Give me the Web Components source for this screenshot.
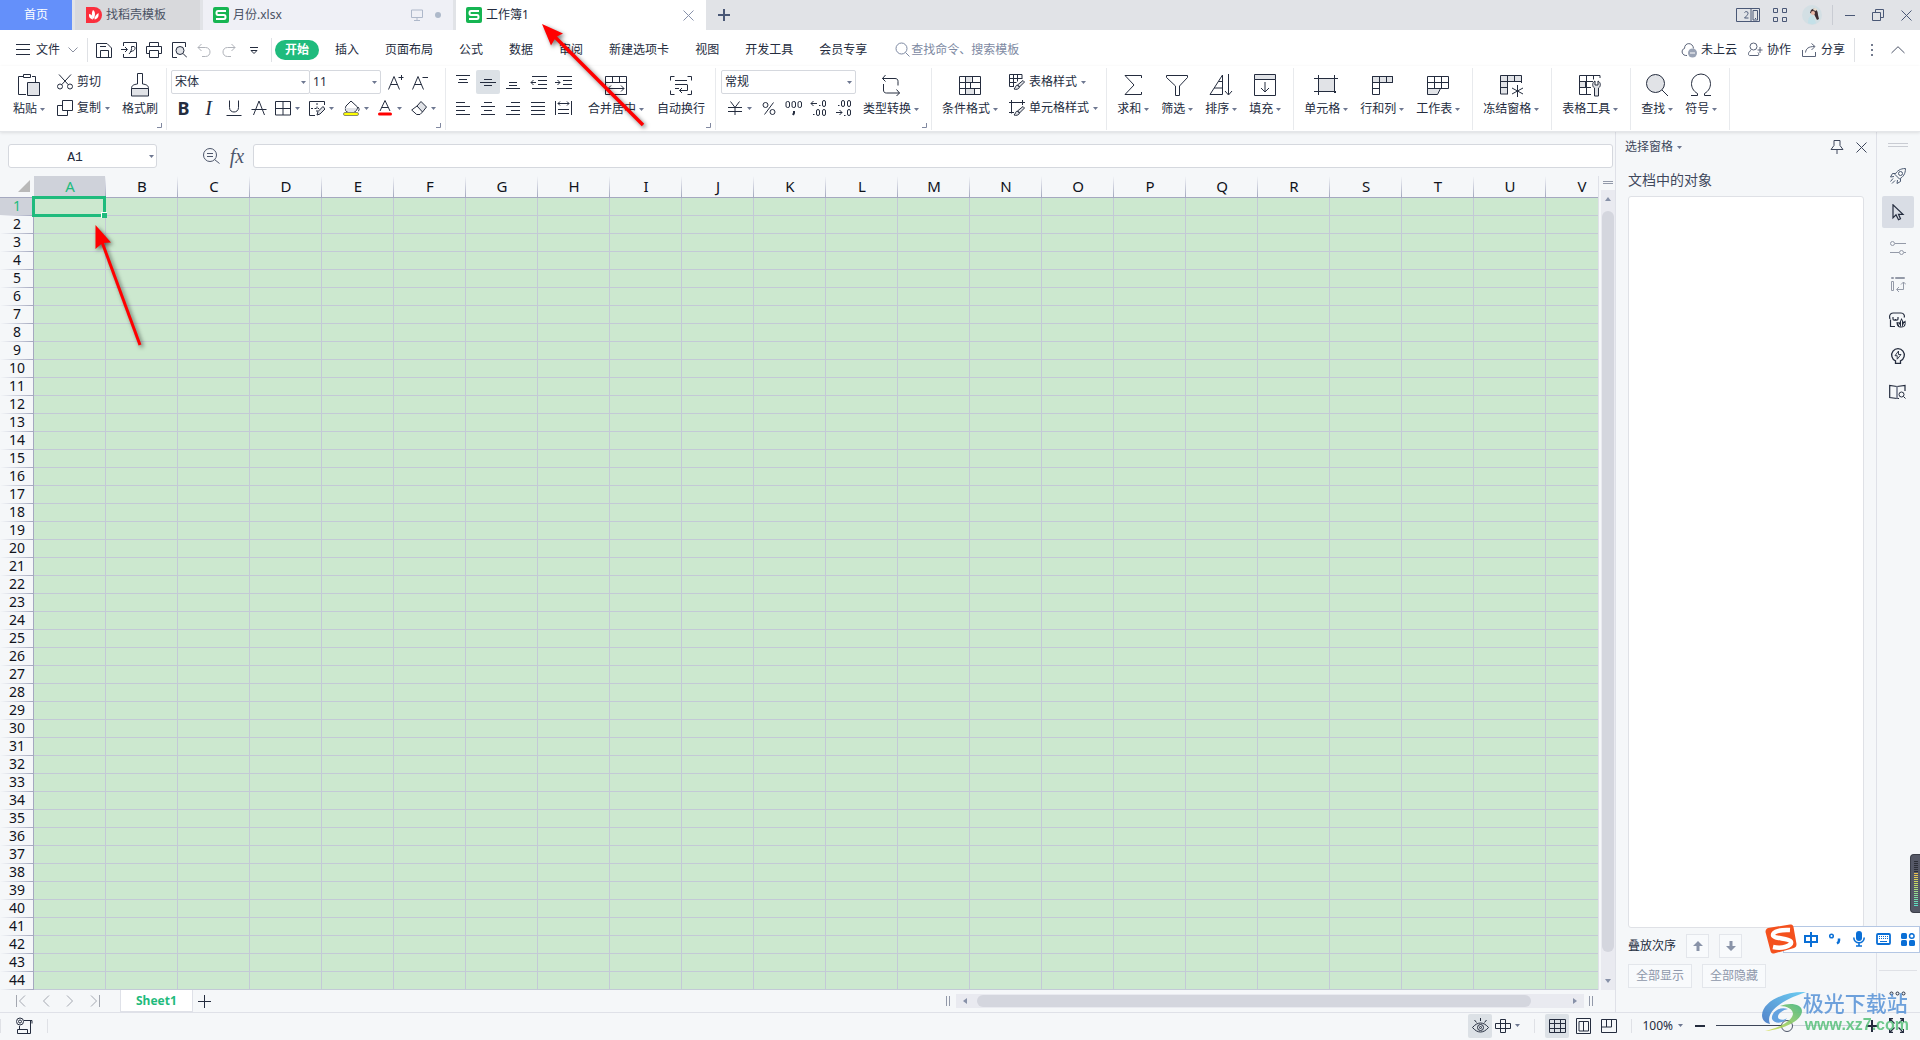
<!DOCTYPE html>
<html lang="zh-CN">
<head>
<meta charset="utf-8">
<title>工作簿1</title>
<style>
html,body{margin:0;height:100%}
body{font:12px/16px "Noto Sans","Noto Sans CJK SC",sans-serif;color:#242c3e;background:#f5f7f9;overflow:hidden}
</style>
</head>
<body>
<et-app></et-app>
<script>
const BASE = `<style>
*{box-sizing:border-box}
:host([hidden]){display:none}
button,input,select{font:inherit;color:inherit;margin:0;padding:0;border:0;background:none;border-radius:0;outline:0}
button{display:flex;align-items:center;justify-content:center;white-space:nowrap}
a{color:inherit;text-decoration:none}
svg{display:block}
</style>`;
function define(name, html, setup) {
  customElements.define(name, class extends HTMLElement {
    constructor() {
      super();
      const root = this.attachShadow({ mode: 'open' });
      const t = document.createElement('template');
      t.innerHTML = BASE + (typeof html === 'function' ? html(this) : html);
      root.append(t.content.cloneNode(true));
      if (setup) setup(root, this);
    }
  });
}

/* [width, height, markup]; strokes use currentColor */
const G = '#e1e3e7';
const ICONS = {
  caret: [5, 3, '<path d="M0 0h5L2.500 3z" fill="#6d7790" stroke="none"/>'],
  launcher: [5, 5, '<path d="M4.500 0v4.500H0" stroke="#8088a0"/>'],
  paste: [22, 24, `<path d="M5 3.500H.5v18H8M14 3.500h3.500V9"/><path d="M5.500 1.500h7v3h-7z"/><path d="M9.500 9.500h12v13h-12z" fill="${G}"/>`],
  cut: [16, 16, '<circle cx="3" cy="12.500" r="2.500"/><circle cx="13" cy="12.500" r="2.500"/><path d="M2 .5L11.300 10.700M14 .5L4.700 10.700"/>'],
  copy: [16, 16, '<path d="M5.500.5h10v10h-10z"/><path d="M5.500 5.500h-5v10h10v-5"/>'],
  brush: [20, 24, `<path d="M1.500 15.500h17v7.500h-17z" fill="${G}"/><path d="M1.500 15.500c0-3 2-4 6-4.500V.5h5V11c4 .5 6 1.500 6 4.500"/>`],
  fontup: [16, 16, '<path d="M.5 15.500L6 2.500l5.500 13M2.500 10.500h7M10.500 3.500h5M13.500 1v5"/>'],
  fontdown: [16, 16, '<path d="M.5 15.500L6 2.500l5.500 13M2.500 10.500h7M10.500 3.500h5.500"/>'],
  under: [16, 16, '<path d="M3.500.5v7c0 6 9 6 9 0v-7M.5 15.500h15"/>'],
  strike: [16, 16, '<path d="M2.500 15L8 1l5.500 14M.5 9.500h15"/>'],
  border: [16, 16, '<path d="M.5 1.500h15v13.500H.5zM8 1.500v13.500M.5 8.500h15"/>'],
  drawborder: [16, 16, `<path d="M15.500 5V1.500H.5v14H6"/><path d="M8 3v9M2 8.500h8" stroke-dasharray="2 1.500"/><path d="M8 15l1-3.500 5-5 2 2.500-5 5z" fill="${G}"/>`],
  fill: [17, 16, `<path d="M3 6l5-5 6.500 6c0 3-2 5-4 5H5C2 12 2 8 3 6z"/><path d="M2 8h12l-3 4H5z" fill="${G}" stroke="none"/><path d="M15 7c1.500 1.500 1.500 4 0 4"/><rect x=".5" y="12.500" width="15" height="3" rx="1.500" fill="#ff0" stroke="#8b8b6a"/>`],
  fontcolor: [16, 16, '<path d="M3 11L8 .5 13 11M4.500 7.500h7"/><rect x="1" y="12.500" width="14" height="3" rx="1.500" fill="red" stroke="none"/>'],
  eraser: [16, 16, `<path d="M6 6L10 1.500l5.500 5.500-4 5z" fill="${G}"/><path d="M6 6L.7 10l5 4.500H9l2.500-2.500"/>`],
  atop: [16, 16, '<path d="M1 1.500h14M4 5.500h8M3 8.500h10" /> '],
  amid: [16, 16, '<path d="M0 8.500h16M4 5.500h8M4 11.500h8"/>'],
  abot: [16, 16, '<path d="M1 14.500h14M4 8.500h8M4 11.500h8"/>'],
  outdent: [17, 16, '<path d="M2 2.500h15M8 6.500h9M8 10.500h9M2 14.500h15M1 8.500h5M3.500 6L1 8.500 3.500 11"/>'],
  indent: [17, 16, '<path d="M2 2.500h15M8 6.500h9M8 10.500h9M2 14.500h15M0 8.500h5M2.500 6L5 8.500 2.500 11"/>'],
  aleft: [16, 16, '<path d="M1 2.500h9M1 6.500h14M1 10.500h9M1 14.500h14"/>'],
  acenter: [16, 16, '<path d="M4 2.500h8M1 6.500h14M4 10.500h8M1 14.500h14"/>'],
  aright: [16, 16, '<path d="M6 2.500h9M1 6.500h14M6 10.500h9M1 14.500h14"/>'],
  ajust: [16, 16, '<path d="M1 2.500h14M1 6.500h14M1 10.500h14M1 14.500h14"/>'],
  adist: [17, 16, '<path d="M.5 1v14M16.500 1v14M3 3.500h11M5 1.500L3 3.500l2 2M12 1.500l2 2-2 2M3 9.500h11M3 13.500h11"/>'],
  merge: [24, 24, '<path d="M1.500 3.500h21v18h-21zM1.500 9.500h21M8.500 3.500v6M15.500 3.500v6M4 15.500h16M7 12.500l-3 3 3 3M17 12.500l3 3-3 3"/>'],
  wrap: [24, 24, '<path d="M5.500 3.500h-4v4M18.500 3.500h4v4M5.500 21.500h-4v-4M18.500 21.500h4v-4M6 7.500h12M6 11.500h12M6 15.500h4M18.500 11.500v6h-8M13 15l-2.500 2.500L13 20"/>'],
  yen: [16, 16, '<path d="M3.500 1.500L8 7.500l4.500-6M1 7.500h14M1 11.500h14M8 7.500V15"/>'],
  pct: [14, 16, '<circle cx="3.500" cy="5" r="2.500"/><circle cx="10.500" cy="12" r="2.500"/><path d="M11.500 2.500l-9 12"/>'],
  thou: [18, 16, '<rect x="1" y="1.500" width="3.500" height="6" rx="1.500"/><rect x="7" y="1.500" width="3.500" height="6" rx="1.500"/><rect x="13" y="1.500" width="3.500" height="6" rx="1.500"/><path d="M9 11v2l-1 2" stroke-width="2"/>'],
  decup: [18, 18, '<path d="M1 4.500h6M3.500 2L1 4.500 3.500 7M9 6.500h1.500M3 15.500h1.500"/><rect x="12.500" y="1.500" width="3" height="6" rx="1.500"/><rect x="6.500" y="10.500" width="3" height="6" rx="1.500"/><rect x="12.500" y="10.500" width="3" height="6" rx="1.500"/>'],
  decdown: [18, 18, '<path d="M1 13.500h6M4.500 11L7 13.500 4.500 16M9 16.500h1.500M3 6.500h1.500"/><rect x="12.500" y="10.500" width="3" height="6" rx="1.500"/><rect x="6.500" y="1.500" width="3" height="6" rx="1.500"/><rect x="12.500" y="1.500" width="3" height="6" rx="1.500"/>'],
  convert: [20, 24, '<path d="M4.500 2L1.500 5.500l3 3M1.500 5.500H14c2 0 3 1 3 3v4M2.500 11v6c0 2 1 3 3 3h13M15.500 16.500l3 3.500-3 3"/>'],
  condfmt: [24, 24, `<path d="M7.500 3.500h6v6h-6zM7.500 15.500h9v6h-9z" fill="${G}" stroke="none"/><path d="M1.500 3.500h21v18h-21zM1.500 9.500h21M1.500 15.500h21M7.500 3.500v18M14.500 3.500v6M12.500 9.500v6M16.500 15.500v6"/>`],
  tblstyle: [16, 16, `<path d="M13 5V.5H.5v12H5M.5 4.500H13M.5 8.500h7M4.500.5v12M8.500.5v7"/><path d="M14 6.500l1.500 1.500-5 5-2-2zM8.500 11c-2 0-2 3-3.500 4 2 .8 5 .3 5.500-2z" fill="${G}"/>`],
  cellstyle: [16, 16, `<path d="M0 2.500h16M2.500 0v13.500M0 12.500h5M13.500 0v5"/><path d="M14 6.500l1.500 1.500-5 5-2-2zM8.500 11c-2 0-2 3-3.500 4 2 .8 5 .3 5.500-2z" fill="${G}"/>`],
  sum: [20, 24, '<path d="M18.500 5V2.500H2L11 12 2 21.500h16.500V19"/>'],
  filter: [24, 24, '<path d="M1.500 2.500h21v2L14.500 13v9.500h-4V13l-9-8.500z"/>'],
  sort: [24, 24, '<path d="M13.500 2v19.500H1zM13.500 8.500H9.500M13.500 15H5M19.500 1v20.500M16 18l3.500 4 3.500-4"/>'],
  filldown: [24, 24, `<path d="M1.500 1.500h21v5h-21z" fill="${G}"/><path d="M1.500 6.500v16h21v-16M12 9v10M8 15l4 4 4-4"/>`],
  cells: [24, 24, `<path d="M4.500 5.500h16v13h-16z" fill="${G}"/><path d="M0 5.500h24M0 18.500h18M4.500 2v20M20.500 2v14"/><path d="M20 18h2v2h-2z" fill="currentColor" stroke="none"/>`],
  rowcol: [24, 24, `<path d="M2.500 3.500h20v6h-20z" fill="${G}"/><path d="M2.500 3.500h20v6h-20zM9.500 3.500v18h-7v-12M16.500 3.500v6M2.500 15.500h7"/>`],
  sheet: [24, 24, `<path d="M1.500 15.500h13l-3 6h-10z" fill="${G}"/><path d="M1.500 3.500v12h21v-12zM1.500 9.500h21M8.500 3.500v12M15.500 3.500v12"/>`],
  freeze: [24, 24, `<path d="M1.500 2.500h21v6h-14v12h-7z" fill="${G}" stroke="none"/><path d="M22.500 10V2.500h-21v18.500H9M1.500 8.500h21M8.500 2.500V21M15.500 2.500v6M1.500 14.500h7M18.500 12v12M13 15l11 6M24 15l-11 6"/>`],
  tbltool: [24, 24, `<path d="M1.500 8.500h6v6h-6z" fill="${G}"/><path d="M22 5V2.500H1.500v19H13M1.500 8.500H15M1.500 14.500H13M8.500 2.500v19M15.500 2.500v4"/><path d="M17 8v4h3V8c3 1.500 3 5.500.5 7v8h-4v-8C14 13.500 14 9.500 17 8z" fill="${G}"/>`],
  find: [24, 24, `<circle cx="10.500" cy="10.500" r="9" fill="${G}"/><path d="M17 17l6 6"/>`],
  omega: [24, 24, '<path d="M2 22.500h6.500v-2C4 18 2.500 14 2.500 10.500a9.500 9.500 0 0 1 19 0c0 3.500-1.500 7.500-6 10v2H22"/>'],
  menu: [14, 12, '<path d="M0 .5h14M0 5.500h14M0 10.500h14"/>'],
  chevd: [10, 6, '<path d="M.5.5L5 5 9.500.5" stroke="#8b90a0"/>'],
  chevu: [14, 8, '<path d="M.5 7L7 .7 13.500 7" stroke="#4d5568"/>'],
  save: [16, 16, '<path d="M.5 1.500h10.500l4.500 4.500v9.500H.5zM4.500 15.500v-7h8v7M4 4.500h6"/>'],
  expo: [17, 16, '<path d="M2.500 4V.5h13v15h-13V12M0 7.500h6M4 5l2.500 2.500L4 10M8 12c2-2 3-5 2.500-7.500h2.500c2 1 1 4-1.500 4.500L9 10"/>'],
  print: [16, 16, '<path d="M3.500 4.500v-4h9v4M3.500 11.500h-3V4.500h15v7h-3M3.500 8.500h9v7h-9z"/>'],
  preview: [16, 16, `<path d="M14.500 5V.5h-13v15H6"/><circle cx="9" cy="8.500" r="4" fill="${G}"/><path d="M12 11.500l4 4"/>`],
  undo: [14, 16, '<path d="M4.500 2L1 5.500 4.500 9M1 5.500h7.500c6 0 6 9 0 9H5" stroke="#b0b3ba"/>'],
  redo: [14, 16, '<path d="M9.500 2L13 5.500 9.500 9M13 5.500H5.500c-6 0-6 9 0 9H9" stroke="#b0b3ba"/>'],
  more: [8, 8, '<path d="M0 1.500h8M1 4.500l3 3 3-3z"/>'],
  search: [15, 15, '<circle cx="6.500" cy="6.500" r="5.500"/><path d="M10.500 10.500l4 4"/>'],
  cloud: [16, 16, '<path d="M6 13.500C0 14 0 7 3.500 6.500 3.500 0 12 0 12.500 6.500" stroke="#5a6378"/><circle cx="11.500" cy="11" r="4.500" fill="#9aa3b5" stroke="none"/><path d="M9 11h5" stroke="#fff"/>'],
  collab: [15, 16, '<circle cx="5.500" cy="4.500" r="3.500" stroke="#5a6378"/><path d="M3 8.500c-3 1-3 5-1.500 5h8.500c1 0 1-2 0-3M12 5v6M9.500 8h5" stroke="#5a6378"/>'],
  share: [15, 16, '<path d="M.5 8v6.500h13V10M3.500 10.500c.5-4 3-6 9-6M9.500 1.500l3.500 3-3.500 3.500" stroke="#5a6378"/>'],
  dots: [2, 12, '<path d="M0 0h2v2H0zM0 5h2v2H0zM0 10h2v2H0z" fill="#737b8e" stroke="none"/>'],
  docer: [16, 16, '<path d="M0 0h8a8 8 0 0 1 0 16H0z" fill="#fb2f3d" stroke="none"/><path d="M7 3c3 2 2 6 1 9-2-2-3-6-1-9zM3 7c3 0 4 3 4 5.500C4 12 2.500 10 3 7zM12.500 6c.5 4-1 6-4 6.500 0-3 1.500-5 4-6.500z" fill="#fff" stroke="none"/>'],
  et: [16, 16, '<rect width="16" height="16" rx="2" fill="#16b552" stroke="none"/><path d="M13 4H5c-2 0-2 4 0 4h6c2 0 2 4 0 4H3" stroke="#fff" stroke-width="2"/>'],
  monitor: [12, 12, '<path d="M.5 1h11v7.500H.5zM6 8.500V11M3 11.500h6" stroke="#aeb8ca"/>'],
  dot: [6, 6, '<circle cx="3" cy="3" r="3" fill="#aeb9ca" stroke="none"/>'],
  close: [11, 11, '<path d="M.5.5l10 10M10.500.5l-10 10"/>'],
  plus: [13, 13, '<path d="M6.500 0v13M0 6.500h13"/>'],
  plusb: [12, 12, '<path d="M6 0v12M0 6h12" stroke-width="2"/>'],
  minusb: [10, 12, '<path d="M0 6h10" stroke-width="2"/>'],
  two: [24, 16, '<path d="M.5 1.500h23v13H15v-13M.5 1.500v13H15M17 3.500h4.500v9.500H17zM19 11.500h1"/><path d="M8.500 5.500c1-1.500 4-1 3.500 1 0 1-2 3-3.500 4.500h4"/>'],
  apps: [14, 14, '<path d="M.5.5h4v4h-4zM9.500.5h4v4h-4zM.5 9.500h4v4h-4zM9.500 9.500h4v4h-4z"/>'],
  avatar: [20, 20, '<circle cx="10" cy="10" r="10" fill="#d3dfe4" stroke="none"/><path d="M9 5c4-3 7 0 7 5l1 4-2 1-3-6-4-1z" fill="#3b2c32" stroke="none"/><circle cx="11" cy="8" r="2" fill="#e9b9a8" stroke="none"/><path d="M6 18c0-5 2-8 5-8l3 8c-3 2-6 1-8 0z" fill="#c4e0e8" stroke="none"/><path d="M12 3l3 1-1 2-3-1z" fill="#eadfd0" stroke="none"/>'],
  min: [10, 11, '<path d="M0 5.500h10"/>'],
  restore: [12, 12, '<path d="M.5 3.500h8v8h-8zM3.500 3.500v-3h8v8h-3"/>'],
  zoomeq: [17, 16, '<circle cx="7" cy="7" r="6.500"/><path d="M11.500 11.500l5 4M4 5.500h6M4 8.500h6"/>'],
  pin: [14, 14, '<path d="M4 .5h6v5l3 4H1l3-4zM7 9.500V14"/>'],
  rocket: [16, 16, '<path d="M15.500.5C10 .5 7 3 5 6.500L9.500 11C13 9 15.500 6 15.500.5zM5.500 5.500H2.500L.5 9 4 8.500M10.500 10.500v3l-3.500 2 .5-3.500M3 10.500l-2.500 3M5 12.500l-3 3" stroke="#4d5b73"/><circle cx="10.500" cy="5.500" r="2" stroke="#4d5b73"/>'],
  cursor: [16, 17, '<path d="M3 .8v13l3-3 2.500 5 2-1-2-4.500H13z" stroke-width="1.200"/>'],
  sliders: [16, 16, '<path d="M5 3.500h11M0 12.500h9M14 12.500h2" stroke="#949aa8"/><circle cx="2.500" cy="3.500" r="2" stroke="#949aa8"/><circle cx="11.500" cy="12.500" r="2" stroke="#949aa8"/>'],
  transp: [16, 16, '<path d="M1.500 1.500h2v1h-2zM5.500 1.500h9v1h-9zM1.500 5.500h2v9h-2zM13.500 6v7.500H7M11 8.500L13.500 6 16 8.500M9 11l-2.500 2.500L9 16" stroke="#949aa8"/>'],
  backup: [17, 16, '<path d="M6 14.500H1.500v-7M1 7C0 4 1 1 4 1h8c3 0 4 3 3 4.500M4 5v2c0 1.500 2.500 1.500 2.500 0 0 1.500 2.500 1.500 2.500 0V5" stroke-width="1.200"/><path d="M7.500 10c0 3.500 1 5.500 5 5.500s4.500-3 4-7l-2 1.500-2-4-2 4.500z" fill="currentColor" stroke="none"/><path d="M12.500 8.500v6M9.500 11.500l1.500 3M15.500 11L14 14.500" stroke="#f5f7f9"/>'],
  bulb: [16, 16, '<path d="M5.500 12.800A6.300 6.300 0 1 1 10.500 12.800v2.500h-5z" stroke-width="1.300"/><path d="M8.500 3L5 7.700h2.200v3.500L11 6.500H8.500z" stroke-width=".9"/>'],
  book: [17, 16, '<path d="M8 2.500L.7 1.500v12L8 14.500M8 2.500l8-1V7M8 2.500v12h2" stroke-width="1.200"/><path d="M8 2.500v12" stroke="#8f95a3" stroke-width="2"/><circle cx="12.500" cy="10.500" r="2.500"/><path d="M14.500 12.500l2 2"/>'],
  dots3: [17, 5, '<circle cx="2.500" cy="2.500" r="1.500"/><circle cx="8.500" cy="2.500" r="1.500"/><circle cx="14.500" cy="2.500" r="1.500"/>'],
  up: [10, 10, '<path d="M5 0l5 5H6.500v5h-3V5H0z" fill="#8993a8" stroke="none"/>'],
  down: [10, 10, '<path d="M5 10l5-5H6.500V0h-3v5H0z" fill="#8993a8" stroke="none"/>'],
  first: [10, 12, '<path d="M.5 0v12M9 .5L3.500 6 9 11.500" stroke="#a3a7b0"/>'],
  prev: [8, 12, '<path d="M7 .5L1.500 6 7 11.500" stroke="#a3a7b0"/>'],
  next: [8, 12, '<path d="M1 .5L6.500 6 1 11.500" stroke="#a3a7b0"/>'],
  last: [10, 12, '<path d="M9.500 0v12M1 .5L6.500 6 1 11.500" stroke="#a3a7b0"/>'],
  grip: [4, 10, '<path d="M.5 0v10M3.500 0v10" stroke="#9299a9"/>'],
  al: [4, 6, '<path d="M4 0v6L0 3z" fill="#8791a8" stroke="none"/>'],
  ar: [4, 6, '<path d="M0 0v6l4-3z" fill="#8791a8" stroke="none"/>'],
  au: [6, 4, '<path d="M0 4h6L3 0z" fill="#8791a8" stroke="none"/>'],
  ad: [6, 4, '<path d="M0 0h6L3 4z" fill="#8791a8" stroke="none"/>'],
  macro: [17, 17, '<circle cx="4" cy="4.500" r="3.500"/><circle cx="4" cy="4.500" r="1.500"/><path d="M8 3.500h8v3M14.500 3.500v13H1.500v-4h10v4M3.500 9v3.500"/>'],
  eye: [17, 16, '<path d="M.5 9.500c5-6 11-6 16 0-5 6-11 6-16 0zM8.500 0v3M2.500 2l2 2.500M14.500 2l-2 2.500"/><circle cx="8.500" cy="9.500" r="3"/><circle cx="8.500" cy="9.500" r="1"/>'],
  cross: [16, 16, '<path d="M5.500 1.500h5v13h-5zM.5 5.500h15v5H.5z"/>'],
  vgrid: [17, 14, '<path d="M.5.500h16v13H.5zM.5 4.500h16M.5 9.500h16M5.500.5v13M11.500.5v13"/>'],
  vpage: [15, 16, '<path d="M.5.500h14v15H.5zM3 3.500h9.500v9.500H3zM7.500 3.500v9.500"/>'],
  vbreak: [16, 14, '<path d="M.5.500h15v13H.5zM5.500.5v7.500M10.500.5v7.500M.5 8h10"/>'],
  full: [15, 15, '<path d="M.5 4V.5H4M.5.5L5.500 5.500M11 .5h3.500V4M14.500.5l-5 5M.5 11v3.500H4M.5 14.500l5-5M14.500 11v3.500H11M14.500 14.500l-5-5" stroke-width="1.300"/>'],
  corner: [12, 12, '<path d="M12 0v12H0z" fill="#b9b9b9" stroke="none"/>'],
  sogou: [32, 30, '<path d="M3 4L25 .5c2 0 3 .5 3.500 2.500L31.500 20c0 2-.5 3-2.500 4L9 29.500c-2 0-3-.5-3.500-2.500L.5 8C.5 6 1 5 3 4z" fill="#f4511e" stroke="none"/><path d="M25 6C17 5.500 8 7 8 11s17 3 18 7-9 7-18 5" stroke="#fff" stroke-width="4.500"/>'],
  zh: [14, 15, '<path d="M1 4h12v6H1zM7 0v15" stroke="#0a6fd6" stroke-width="2"/>'],
  punct: [12, 12, '<circle cx="2.500" cy="3" r="1.800" stroke="#0a6fd6" stroke-width="1.500"/><path d="M10 5.500v2c0 1.500-1 2.500-2 3" stroke="#0a6fd6" stroke-width="2.500"/>'],
  mic: [12, 16, '<rect x="3" width="6" height="10" rx="3" fill="#0a6fd6" stroke="none"/><path d="M.8 6.500c0 7 10.400 7 10.400 0M3 15h6M6 12v3" stroke="#0a6fd6" stroke-width="1.600"/>'],
  kbd: [15, 12, '<rect x="1" y="1" width="13" height="10" rx="1" stroke="#0a6fd6" stroke-width="1.800"/><path d="M3 3.500h9M3 5.500h9" stroke="#0a6fd6" stroke-dasharray="1 1"/><path d="M4 8.500h7" stroke="#0a6fd6"/>'],
  tiles: [14, 13, '<g fill="#0a6fd6" stroke="none"><rect width="6" height="6" rx="1.500"/><rect x="8" y="7" width="6" height="6" rx="1.500"/><rect y="7" width="6" height="6" rx="1.500"/></g><circle cx="10.800" cy="3" r="2.300" stroke="#0a6fd6" stroke-width="1.500"/>']
};
define('et-icon', el => {
  const [w, h, m] = ICONS[el.getAttribute('name')] || [0, 0, ''];
  return `<style>:host{display:block;flex:none}</style><svg width="${w}" height="${h}" viewBox="0 0 ${w} ${h}" fill="none" stroke="currentColor" aria-hidden="true">${m}</svg>`;
});
const ic = n => `<et-icon name="${n}"></et-icon>`;

/* controls */
define('et-big', el => `<style>
:host{display:block;flex:none}
button{flex-direction:column;align-items:stretch;justify-content:flex-start;height:56px;padding-top:5px}
.i{display:flex;justify-content:center;align-items:center;height:24px;margin-bottom:4px}
.l{display:flex;align-items:center;gap:3px}
</style><button><span class="i">${ic(el.getAttribute('icon'))}</span><span class="l"><slot></slot>${el.hasAttribute('drop') ? ic('caret') : ''}</span></button>`);
define('et-row', el => `<style>
:host{display:block;height:24px}
button{height:24px;gap:4px}
</style><button>${ic(el.getAttribute('icon'))}<slot></slot>${el.hasAttribute('drop') ? ic('caret') : ''}</button>`);
define('et-tool', el => `<style>
:host{display:block;flex:none}
button{width:24px;height:24px}
:host([wide]) button{width:25px}
:host([drop]) button{width:34px;justify-content:flex-start;gap:4px;padding-left:4px}
:host([on]) button{background:#dce1e6;border-radius:2px}
</style><button aria-label="${el.getAttribute('label')}"><slot></slot>${el.hasAttribute('icon') ? ic(el.getAttribute('icon')) : ''}${el.hasAttribute('drop') ? ic('caret') : ''}</button>`);
define('et-select', el => `<style>
:host{display:grid;height:24px;border:1px solid #d5d8de;border-radius:2px;background:#fff;align-items:center}
select,et-icon{grid-area:1/1}
select{appearance:none;width:100%;height:22px;padding-left:3px}
et-icon{justify-self:end;margin-right:3px;pointer-events:none}
</style><select aria-label="${el.getAttribute('label')}"><option>${el.getAttribute('value')}</option></select>${ic('caret')}`);
define('et-group', el => `<style>
:host{display:flex;position:relative;flex:none;gap:12px;height:62px;padding:0 12px 0 10px;border-right:1px solid #e8eaed}
et-icon{position:absolute;right:4px;bottom:2px}
</style><slot></slot>${el.hasAttribute('launch') ? ic('launcher') : ''}`);

define('et-tab', el => `<style>
:host{display:flex;align-items:center;flex:none;gap:4px;height:30px;padding:0 11px;width:125px;background:#d8d9dc;color:#4a5264}
:host([home]){width:72px;background:#6490fa;color:#fff;justify-content:center}
:host([doc]){width:250px;background:#eff0f6;padding:0 12px 0 10px}
:host([active]){background:#fff;color:#242c3e}
.end{margin-left:auto;display:flex;align-items:center;gap:12px;color:#8791aa}
:host([home]) .end{display:none}
</style>${el.hasAttribute('icon') ? ic(el.getAttribute('icon')) : ''}<a href="#"><slot></slot></a><span class="end"><slot name="end"></slot></span>`);

define('et-titlebar', `<style>
:host{display:flex;align-items:center;gap:3px;height:30px;background:#e1e3e7;color:#4a5876}
button{height:30px}
.new{width:30px}
.right{margin-left:auto;display:flex;align-items:center;padding-right:8px}
.right > button:nth-child(1){margin-right:13px}
.right > button:nth-child(2){margin-right:15px}
hr{width:1px;height:20px;margin:0 12px 0 10px;border:0;background:#c9ccd3}
.win{display:flex;gap:17px}
.x{color:#8791aa;height:24px}
</style>
<et-tab home>首页</et-tab><et-tab icon="docer">找稻壳模板</et-tab>
<et-tab doc icon="et">月份.xlsx<et-icon slot="end" name="monitor"></et-icon><et-icon slot="end" name="dot"></et-icon></et-tab>
<et-tab doc active icon="et">工作簿1<button class="x" slot="end" aria-label="关闭标签">${ic('close')}</button></et-tab>
<button class="new" aria-label="新建">${ic('plusb')}</button>
<div class="right"><button aria-label="窗口">${ic('two')}</button><button aria-label="应用">${ic('apps')}</button><button aria-label="账号">${ic('avatar')}</button><hr>
<div class="win"><button aria-label="最小化">${ic('min')}</button><button aria-label="还原">${ic('restore')}</button><button aria-label="关闭">${ic('close')}</button></div></div>`);

define('et-menubar', `<style>
:host{display:flex;align-items:center;height:36px;padding:3px 15px 0 16px;background:#fff}
.file{gap:6px}.file et-icon:last-child{margin-left:2px}
hr{width:1px;height:24px;margin:0 8px 0 9px;border:0;background:#dfe1e5;flex:none}
.quick{display:flex;gap:9px}
.quick button{width:16px;height:24px}
nav{display:flex;align-items:center;gap:26px;margin-left:-5px}
nav a{white-space:nowrap}
nav a.on{background:#1fbb7d;color:#fff;font-weight:700;border-radius:10px;padding:2px 10px;margin-right:-10px}
.search{display:flex;align-items:center;gap:1px;margin-left:28px;color:#7d89a2}
.search input{width:160px;height:24px}
.search input::placeholder{color:#7d89a2;opacity:1}
.right{margin-left:auto;display:flex;align-items:center}
.right button{gap:4px;height:24px}
.right .g{display:flex;gap:11px}
.right .d{margin:0 18px 0 8px}
</style>
<button class="file">${ic('menu')}文件${ic('chevd')}</button><hr>
<div class="quick"><button aria-label="保存">${ic('save')}</button><button aria-label="输出为PDF">${ic('expo')}</button><button aria-label="打印">${ic('print')}</button><button aria-label="打印预览">${ic('preview')}</button><button aria-label="撤销">${ic('undo')}</button><button aria-label="恢复">${ic('redo')}</button><button aria-label="更多">${ic('more')}</button></div><hr>
<nav><a class="on" href="#">开始</a><a href="#">插入</a><a href="#">页面布局</a><a href="#">公式</a><a href="#">数据</a><a href="#">审阅</a><a href="#">新建选项卡</a><a href="#">视图</a><a href="#">开发工具</a><a href="#">会员专享</a></nav>
<label class="search">${ic('search')}<input aria-label="搜索" placeholder="查找命令、搜索模板"></label>
<div class="right"><div class="g"><button>${ic('cloud')}未上云</button><button>${ic('collab')}协作</button><button>${ic('share')}分享</button></div><hr><button class="d" aria-label="更多选项">${ic('dots')}</button><button aria-label="折叠功能区">${ic('chevu')}</button></div>`);

const big = (i, t, d = 1) => `<et-big icon="${i}" ${d ? 'drop' : ''}>${t}</et-big>`;
const tool = (i, l, x = '') => `<et-tool icon="${i}" label="${l}" ${x}></et-tool>`;
define('et-ribbon', `<style>
:host{display:flex;height:66px;padding-top:2px;background:#fff;border-bottom:1px solid #e4e6e9;box-shadow:0 1px 3px #0000001a;position:relative;z-index:1}
.col{display:flex;flex-direction:column;gap:2px;padding-top:2px}
.r{display:flex}
.g1{gap:1px}
.clip{padding:0 8px 0 13px}
.font{padding:0 4px 0 4px}
.align{padding:0 10px 0 5px;gap:13px}
.num{padding:0 12px 0 5px;gap:7px}
.style{padding:0 8px 0 10px;gap:11px}
.money{padding-left:2px}
.fam{width:139px}.size{width:72px;margin-left:-1px}
.step{display:flex;padding-left:3px}
b{font-size:18px}
i{font:italic 20px/24px "Liberation Serif",serif}
</style>
<et-group class="clip" launch>${big('paste', '粘贴')}<div class="col"><et-row icon="cut">剪切</et-row><et-row icon="copy" drop>复制</et-row></div>${big('brush', '格式刷', 0)}</et-group>
<et-group class="font" launch><div class="col"><div class="r"><et-select class="fam" label="字体" value="宋体"></et-select><et-select class="size" label="字号" value="11"></et-select><div class="step">${tool('fontup', '增大字号')}${tool('fontdown', '减小字号')}</div></div>
<div class="r"><et-tool wide label="加粗"><b>B</b></et-tool><et-tool wide label="倾斜"><i>I</i></et-tool>${tool('under', '下划线', 'wide')}${tool('strike', '删除线', 'wide')}${tool('border', '边框', 'drop')}${tool('drawborder', '绘制边框', 'drop')}${tool('fill', '填充颜色', 'drop')}${tool('fontcolor', '字体颜色', 'drop')}${tool('eraser', '清除', 'drop')}</div></div></et-group>
<et-group class="align" launch><div class="col"><div class="r g1">${tool('atop', '顶端对齐')}${tool('amid', '垂直居中', 'on')}${tool('abot', '底端对齐')}${tool('outdent', '减少缩进')}${tool('indent', '增加缩进')}</div>
<div class="r g1">${tool('aleft', '左对齐')}${tool('acenter', '水平居中')}${tool('aright', '右对齐')}${tool('ajust', '两端对齐')}${tool('adist', '分散对齐')}</div></div>${big('merge', '合并居中')}${big('wrap', '自动换行', 0)}</et-group>
<et-group class="num" launch><div class="col"><et-select label="数字格式" value="常规"></et-select><div class="r money">${tool('yen', '货币', 'drop')}<div class="r g1">${tool('pct', '百分比')}${tool('thou', '千位分隔')}${tool('decup', '增加小数位')}${tool('decdown', '减少小数位')}</div></div></div>${big('convert', '类型转换')}</et-group>
<et-group class="style">${big('condfmt', '条件格式')}<div class="col"><et-row icon="tblstyle" drop>表格样式</et-row><et-row icon="cellstyle" drop>单元格样式</et-row></div></et-group>
<et-group>${big('sum', '求和')}${big('filter', '筛选')}${big('sort', '排序')}${big('filldown', '填充')}</et-group>
<et-group>${big('cells', '单元格')}${big('rowcol', '行和列')}${big('sheet', '工作表')}</et-group>
<et-group>${big('freeze', '冻结窗格')}</et-group><et-group>${big('tbltool', '表格工具')}</et-group>
<et-group>${big('find', '查找')}${big('omega', '符号')}</et-group>`);

define('et-formula', `<style>
:host{display:flex;align-items:center;height:44px;padding:12px 2px 8px 8px;color:#4d566b}
.name{display:grid;width:149px;height:24px;align-items:center;border:1px solid #d5d8de;border-radius:3px;background:#fff}
.name *{grid-area:1/1}
.name input{width:100%;height:22px;padding:2px 15px 0 0;text-align:center;font:13px/20px "Liberation Mono",monospace;color:#242c3e}
.name et-icon{justify-self:end;margin-right:2px}
.z{margin:0 9px 0 46px;height:24px}
.fx{font:italic 20px/24px "Liberation Serif",serif;width:16px;margin-right:8px}
.f{flex:1;min-width:0;height:24px;border:1px solid #d5d8de;border-radius:3px;background:#fff;padding:0 6px}
</style><span class="name"><input aria-label="名称框" value="A1">${ic('caret')}</span><button class="z" aria-label="查看公式">${ic('zoomeq')}</button><button class="fx" aria-label="插入函数">fx</button><input class="f" aria-label="编辑栏">`);

define('et-grid', () => {
  const L = 'ABCDEFGHIJKLMNOPQRSTUV'.split('');
  let rows = '';
  for (let r = 1; r <= 44; r++) rows += `<tr${r === 1 ? ' class="cur"' : ''}><th scope="row">${r}</th>${L.map((c, i) => r === 1 && i === 0 ? '<td><span class="sel"></span></td>' : '<td></td>').join('')}</tr>`;
  return `<style>
:host{display:flex;flex:1;min-height:0}
.view{flex:1;min-width:0;overflow:hidden;border-right:1px solid #dfe1e8}
table{border-collapse:separate;border-spacing:0;table-layout:fixed;width:1618px;font-size:15px;line-height:17px;color:#10131c}
col{width:72px}col:first-child{width:34px}
th{font-weight:400;padding:0}
thead th{height:22px;padding-bottom:1px;border-bottom:1px solid #a5a9c0;background:linear-gradient(#f5f7f9,#a5a9c0) right/1px 100% no-repeat}
thead th.on{color:#1fbb7d;background-color:#cfd2da}
thead th:first-child{background:none}
thead et-icon{margin-left:18px}
tbody th{height:18px;padding:0 0 3px 1px;font-size:14px;line-height:14px;text-align:center;border-right:1px solid #a5a9c0;background:linear-gradient(90deg,#f5f7f9,#a5a9c0) bottom/100% 1px no-repeat}
.cur th{color:#1fbb7d;background-color:#cfd2da}
td{height:18px;padding:0;background:#cce8cf;border-right:1px solid #c3c9d6;border-bottom:1px solid #c3c9d6;position:relative}
.sel{position:absolute;z-index:1;inset:-2px -1px -2px -2px;border:3px solid #1fbb7d}
.sel::after{content:"";position:absolute;right:-4px;bottom:-4px;width:5px;height:5px;background:#1fbb7d;border:solid #fff;border-width:1px 0 0 1px;box-sizing:content-box}
.bar{display:flex;flex-direction:column;align-items:center;width:16px;padding-left:1px}
.split{width:10px;height:3px;margin:5px 0 6px;border:solid #9299a9;border-width:1px 0}
.track{flex:1;width:14px;background:#e9eaf0;display:flex;flex-direction:column;align-items:center;padding:7px 0}
.thumb{flex:1;width:12px;border-radius:6px;background:#d4d6de;margin:10px 0 27px}
</style>
<div class="view"><table><colgroup>${'<col>'.repeat(23)}</colgroup><thead><tr><th aria-label="全选">${ic('corner')}</th>${L.map((c, i) => `<th scope="col"${i ? '' : ' class="on"'}>${c}</th>`).join('')}</tr></thead><tbody>${rows}</tbody></table></div>
<div class="bar"><div class="split"></div><div class="track">${ic('au')}<div class="thumb"></div>${ic('ad')}</div></div>`;
});

define('et-sheets', `<style>
:host{display:flex;align-items:center;height:22px;padding:0 22px 0 16px}
.nav{display:flex;gap:16px;width:104px}
button{height:22px}
.tab{height:22px;padding:0 15px;border:1px solid #dfe1e8;border-top:0;background:#fff;color:#1fbb7d;font-weight:700}
.add{margin-left:5px}
.bar{flex:0 1 647px;margin-left:auto;display:flex;align-items:center;gap:5px}
.track{flex:1;height:14px;background:#e9eaf0;display:flex;align-items:center;padding:0 7px;margin-left:1px}
.thumb{flex:1;height:12px;border-radius:6px;background:#d4d6de;margin:0 42px 0 10px}
</style><div class="nav"><button aria-label="首个">${ic('first')}</button><button aria-label="上一个">${ic('prev')}</button><button aria-label="下一个">${ic('next')}</button><button aria-label="末个">${ic('last')}</button></div>
<button class="tab">Sheet1</button><button class="add" aria-label="新建工作表">${ic('plus')}</button>
<div class="bar">${ic('grip')}<div class="track">${ic('al')}<div class="thumb"></div>${ic('ar')}</div>${ic('grip')}</div>`);

define('et-pane', `<style>
:host{display:flex;flex-direction:column;width:261px;padding:5px 12px 24px 12px;border-left:1px solid #dfe1e8;color:#3e475c}
header{display:flex;align-items:center;height:20px;margin-left:-3px}
header button{gap:4px}
header .pin{margin:0 12px 0 auto}
header .x{margin-right:-3px}
h2{margin:12px 0 5px;font-size:14px;line-height:22px;font-weight:400}
.list{flex:1;border:1px solid #dfe1e6;border-radius:3px;background:#fff}
.o{display:flex;align-items:center;gap:10px;margin-top:6px;color:#242c3e}
.o button{width:23px;height:24px;border:1px solid #e3e6eb;background:#f8fafc}
.s{display:flex;gap:10px;margin-top:6px;color:#8e97aa}
.s button{width:64px;height:24px;border:1px solid #e3e6eb;background:#f8fafc}
</style><header><button>选择窗格${ic('caret')}</button><button class="pin" aria-label="固定">${ic('pin')}</button><button class="x" aria-label="关闭窗格">${ic('close')}</button></header>
<h2>文档中的对象</h2><div class="list" role="listbox" aria-label="文档中的对象"></div>
<div class="o">叠放次序<button aria-label="上移">${ic('up')}</button><button aria-label="下移">${ic('down')}</button></div>
<div class="s"><button>全部显示</button><button>全部隐藏</button></div>`);

define('et-rail', `<style>
:host{display:flex;flex-direction:column;align-items:center;gap:4px;width:44px;padding:11px 2px 0 0;border-left:1px solid #dfe1e8}
.grip{width:20px;height:4px;border:solid #c9ccd3;border-width:1px 0;margin-bottom:9px}
button{width:32px;height:32px}
.on{background:#d9dde5;border-radius:2px}
hr{width:38px;height:1px;margin:auto 0 2px;border:0;background:#dfe1e6}
.m{margin-bottom:3px}
</style><div class="grip"></div>
<button aria-label="效率">${ic('rocket')}</button><button class="on" aria-label="选择">${ic('cursor')}</button><button aria-label="属性">${ic('sliders')}</button><button aria-label="转置">${ic('transp')}</button><button aria-label="备份">${ic('backup')}</button><button aria-label="灵感">${ic('bulb')}</button><button aria-label="帮助">${ic('book')}</button>
<hr><button class="m" aria-label="更多">${ic('dots3')}</button>`);

define('et-status', `<style>
:host{display:flex;align-items:center;height:28px;padding:0 12px 2px 0;border-top:1px solid #dfe1e8}
button{width:24px;height:24px}
hr{width:1px;height:14px;margin:0 10px 0 14px;border:0;background:#dfe1e6;flex:none}
hr.s{margin:0 10px}
hr.l{margin:0 11px 0 0}
hr.m{margin:0 0 0 11px}
.on{background:#dce1e6;border-radius:2px}
.right{margin-left:auto;display:flex;align-items:center}
.sp{width:25px;gap:4px;margin-left:3px}
.v{display:flex;gap:2px}
.p{width:auto;gap:5px}
.zoom{display:flex;align-items:center;margin-left:5px}
input{appearance:none;width:144px;height:16px;margin:0 0 0 4px;background:linear-gradient(90deg,#3c4558 50%,#c9ced8 50%) center/100% 1px no-repeat}
input::-webkit-slider-thumb{appearance:none;width:12px;height:12px;border:1px solid #4d5568;border-radius:50%;background:#f5f7f9}
</style><hr class="l"><button aria-label="宏">${ic('macro')}</button><hr class="m">
<div class="right"><button class="on" aria-label="护眼模式">${ic('eye')}</button><button class="sp" aria-label="阅读模式">${ic('cross')}${ic('caret')}</button><hr>
<div class="v"><button class="on" aria-label="普通视图">${ic('vgrid')}</button><button aria-label="页面布局">${ic('vpage')}</button><button aria-label="分页预览">${ic('vbreak')}</button></div><hr class="s">
<button class="p">100%${ic('caret')}</button><div class="zoom"><button aria-label="缩小">${ic('minusb')}</button><input type="range" aria-label="缩放" min="0" max="200" value="98"><button aria-label="放大">${ic('plusb')}</button></div><button aria-label="全屏">${ic('full')}</button></div>`);

/* floating layers */
define('ime-bar', `<style>
:host{position:absolute;right:0;bottom:86px;z-index:3;display:flex;align-items:center}
.logo{position:relative;z-index:1;margin-right:-14px}
.b{display:flex;align-items:center;gap:10px;height:27px;padding:0 4px 0 20px;background:#fff;border:1px solid #b4c7e4}
.b button{min-width:14px;height:24px}
</style><div class="logo">${ic('sogou')}</div><div class="b"><button aria-label="中文">${ic('zh')}</button><button aria-label="标点">${ic('punct')}</button><button aria-label="语音">${ic('mic')}</button><button aria-label="键盘">${ic('kbd')}</button><button aria-label="工具箱">${ic('tiles')}</button></div>`);
define('level-meter', `<style>
:host{position:absolute;right:0;bottom:127px;z-index:3;width:10px;height:59px;padding:6px 2px 6px 3px;background:#555866;border:1px solid #3b3e49;border-right:0;border-radius:4px 0 0 4px}
div{height:45px;background:repeating-linear-gradient(#0000 0 1px,#555866 1px 2px),linear-gradient(#2b2d36 25%,#f0c04c 26%,#c9dc62 50%,#55dfc8)}
</style><div></div>`);
define('site-mark', `<style>
:host{position:absolute;right:11px;bottom:5px;z-index:4;display:flex;align-items:center;pointer-events:none;opacity:.88}
.t{display:flex;flex-direction:column;margin-left:-4px}
strong{font:500 21px/26px "Noto Sans CJK SC",sans-serif;color:#5b95d8}
span{font:700 16px/20px "Liberation Sans",sans-serif;color:#5cc27e;padding-left:2px}
</style><svg width="46" height="42" viewBox="0 0 46 42"><defs><linearGradient id="a" x1="1" x2="0" y2="1"><stop stop-color="#59c8f2"/><stop offset="1" stop-color="#3f74c4"/></linearGradient><linearGradient id="b" x1="1" x2="0" y2="1"><stop stop-color="#3fb37c"/><stop offset="1" stop-color="#d8e04a"/></linearGradient></defs>
<path d="M45 1C24 0 2 10 1 24c0 5 3 8 8 9-4-9 4-21 36-32z" fill="url(#a)"/><path d="M19 15c10-4 22-2 22 5 0 10-20 19-37 20 14-3 27-10 28-17 0-5-6-8-13-8z" fill="url(#b)"/><path d="M27 18c-10-3-17 4-16 10 2 5 12 5 15-1-3 3-9 2-9-1 0-4 5-7 10-8z" fill="#4f97dd"/></svg>
<div class="t"><strong>极光下载站</strong><span>www.xz7.com</span></div>`);
define('red-arrows', `<style>
:host{position:absolute;left:0;top:0;z-index:5;pointer-events:none}
svg{filter:drop-shadow(2px 2px 2px #0008)}
</style><svg width="700" height="360" viewBox="0 0 700 360" fill="red" stroke="red"><path d="M554 36L643 125" stroke-width="3.500" fill="none"/><path d="M542 24l21 9.500-7 3.500-5 8.500z" stroke="none"/><path d="M102 242L140 345" stroke-width="3" fill="none"/><path d="M95.500 225l15.500 17.500-8.500.5-7 6z" stroke="none"/></svg>`);

define('et-app', `<style>
:host{display:flex;flex-direction:column;height:100vh;position:relative;overflow:hidden}
.body{flex:1;min-height:0;display:flex}
main{flex:1;min-width:0;display:flex;flex-direction:column}
</style><et-titlebar></et-titlebar><et-menubar></et-menubar><et-ribbon></et-ribbon>
<div class="body"><main><et-formula></et-formula><et-grid></et-grid><et-sheets></et-sheets></main><et-pane></et-pane><et-rail></et-rail></div>
<et-status></et-status><ime-bar></ime-bar><level-meter></level-meter><site-mark></site-mark><red-arrows></red-arrows>`);
</script>
</body>
</html>
